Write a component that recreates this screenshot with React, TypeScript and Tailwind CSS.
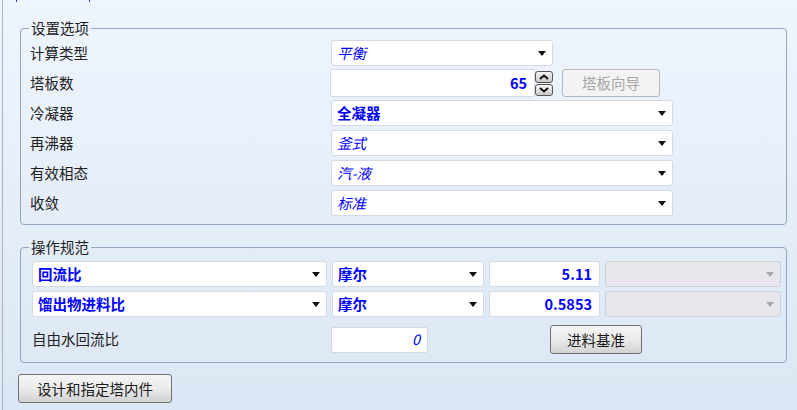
import React from "react";

const font = { fontFamily: '"Noto Sans CJK SC", "Noto Sans", sans-serif' };

function Arrow({ disabled }: { disabled?: boolean }) {
  return (
    <svg width="8" height="5" viewBox="0 0 8 5" className="shrink-0">
      <path d="M0 0h8L4 5z" fill={disabled ? "#a8a8b0" : "#111"} />
    </svg>
  );
}

function Select({
  value,
  italic,
  bold,
  width,
  disabled,
}: {
  value?: string;
  italic?: boolean;
  bold?: boolean;
  width: string;
  disabled?: boolean;
}) {
  return (
    <div
      className={`${width} h-[26px] flex items-center justify-between pl-[5px] pr-[6px] rounded-[3px] border ${
        disabled ? "bg-[#e6e6ec] border-[#cfd2d8]" : "bg-white border-[#d3dae4]"
      }`}
    >
      <span
        className={`text-[14.5px] leading-none text-[#0000ff] ${italic ? "italic" : ""} ${
          bold ? "font-bold" : ""
        }`}
      >
        {value}
      </span>
      <Arrow disabled={disabled} />
    </div>
  );
}

function NumBox({ value, width, italic, bold }: { value: string; width: string; italic?: boolean; bold?: boolean }) {
  return (
    <div
      className={`${width} h-[26px] flex items-center justify-end pr-[7px] bg-white border border-[#d3dae4] rounded-[2px]`}
    >
      <span
        className={`text-[14.5px] leading-none text-[#0000ff] ${italic ? "italic" : ""} ${
          bold ? "font-bold" : ""
        }`}
      >
        {value}
      </span>
    </div>
  );
}

function SpinBtn({ up }: { up?: boolean }) {
  return (
    <div className="w-[18px] h-[12px] flex items-center justify-center rounded-[3px] border border-[#555] bg-gradient-to-b from-[#f6f6f6] to-[#c8c8c8]">
      <svg width="10" height="6" viewBox="0 0 10 6">
        <path
          d={up ? "M1 5L5 1.5L9 5" : "M1 1L5 4.5L9 1"}
          fill="none"
          stroke="#111"
          strokeWidth="2"
        />
      </svg>
    </div>
  );
}

function Button({ label, width, disabled }: { label: string; width: string; disabled?: boolean }) {
  return (
    <div
      className={`${width} h-[28px] flex items-center justify-center rounded-[3px] border text-[14.5px] ${
        disabled
          ? "border-[#b4b8bc] bg-[#f3f3f3] text-[#a6a6a6]"
          : "border-[#707070] bg-gradient-to-b from-[#f4f4f4] via-[#ebebeb] to-[#d2d2d2] text-[#1a1a1a]"
      }`}
    >
      {label}
    </div>
  );
}

function Label({ text }: { text: string }) {
  return <div className="text-[14.5px] leading-none text-[#222]">{text}</div>;
}

export default function App() {
  const rows: { label: string; value: string; italic?: boolean; bold?: boolean }[] = [
    { label: "冷凝器", value: "全凝器", bold: true },
    { label: "再沸器", value: "釜式", italic: true },
    { label: "有效相态", value: "汽-液", italic: true },
    { label: "收敛", value: "标准", italic: true },
  ];

  return (
    <div
      style={font}
      className="w-[797px] h-[410px] overflow-hidden bg-gradient-to-b from-[#eff5fd] to-[#dbe7f4] relative"
    >
      <div className="absolute left-[16px] top-0 w-[1px] h-[2px] bg-[#2040c0]" />
      <div className="absolute left-[89px] top-0 w-[1px] h-[2px] bg-[#2040c0]" />
      <div className="ml-[2px] h-full border-l border-[#aab3bf] pl-[17px] pt-[20px]">
        {/* 设置选项 */}
        <fieldset className="w-[767px] border border-[#92a6bf] rounded-[4px] pl-[9px] pb-[8px]">
          <legend className="-ml-[1px] px-[2px] text-[14.5px] leading-[16px] text-[#222]">设置选项</legend>
          <div className="flex flex-col gap-[4px] pt-[4px]">
            <div className="flex items-center h-[26px]">
              <div className="w-[301px]">
                <Label text="计算类型" />
              </div>
              <Select value="平衡" italic width="w-[222px]" />
            </div>
            <div className="flex items-center h-[26px]">
              <div className="w-[300px]">
                <Label text="塔板数" />
              </div>
              <NumBox value="65" bold width="w-[205px] h-[28px]" />
              <div className="flex flex-col gap-[1px]">
                <SpinBtn up />
                <SpinBtn />
              </div>
              <div className="ml-[9px]">
                <Button label="塔板向导" width="w-[98px]" disabled />
              </div>
            </div>
            {rows.map((r) => (
              <div key={r.label} className="flex items-center h-[26px]">
                <div className="w-[301px]">
                  <Label text={r.label} />
                </div>
                <Select value={r.value} italic={r.italic} bold={r.bold} width="w-[342px]" />
              </div>
            ))}
          </div>
        </fieldset>

        {/* 操作规范 */}
        <fieldset className="mt-[14px] w-[767px] border border-[#92a6bf] rounded-[4px] pl-[11px] pb-[8px]">
          <legend className="-ml-[3px] px-[2px] text-[14.5px] leading-[16px] text-[#222]">操作规范</legend>
          <div className="flex flex-col gap-[4px] pt-[6px]">
            <div className="flex items-center gap-[5px] h-[26px]">
              <Select value="回流比" bold width="w-[295px]" />
              <Select value="摩尔" bold width="w-[152px]" />
              <NumBox value="5.11" bold width="w-[111px]" />
              <Select disabled width="w-[176px]" />
            </div>
            <div className="flex items-center gap-[5px] h-[26px]">
              <Select value="馏出物进料比" bold width="w-[295px]" />
              <Select value="摩尔" bold width="w-[152px]" />
              <NumBox value="0.5853" bold width="w-[111px]" />
              <Select disabled width="w-[176px]" />
            </div>
            <div className="flex items-center h-[29px] mt-[4px]">
              <div className="w-[299px]">
                <Label text="自由水回流比" />
              </div>
              <NumBox value="0" italic width="w-[97px]" />
              <div className="ml-[122px]">
                <Button label="进料基准" width="w-[92px] h-[29px]" />
              </div>
            </div>
          </div>
        </fieldset>

        <div className="mt-[11px] -ml-[2px]">
          <Button label="设计和指定塔内件" width="w-[154px] h-[29px]" />
        </div>
      </div>
    </div>
  );
}
